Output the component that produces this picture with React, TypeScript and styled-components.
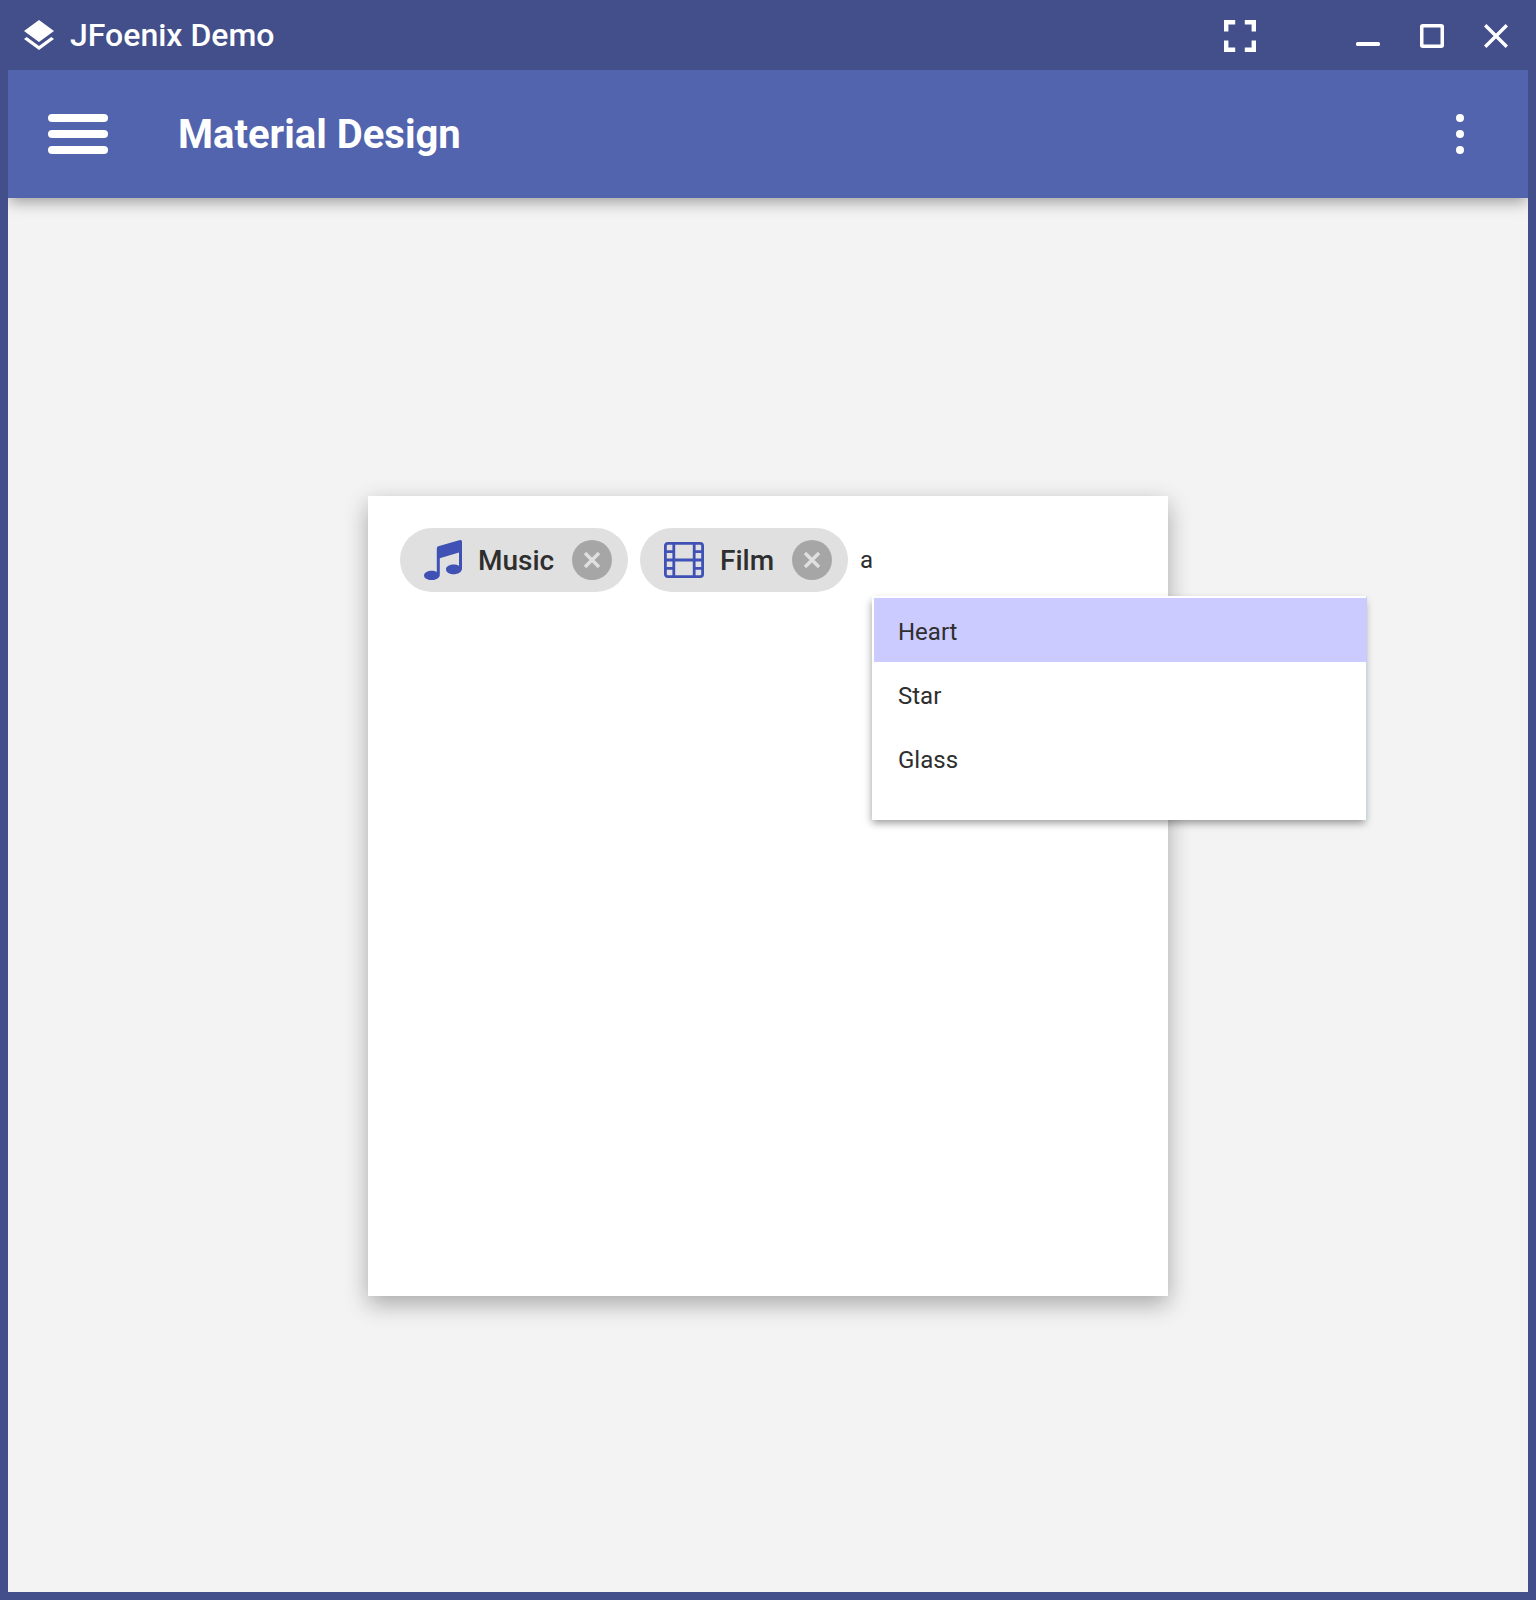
import React from "react";
import styled, { createGlobalStyle } from "styled-components";

const GlobalStyle = createGlobalStyle`
  *, *::before, *::after { box-sizing: border-box; }
  body { margin: 0; font-family: Roboto, "Liberation Sans", sans-serif; }
`;

const WindowFrame = styled.div`
  width: 1536px;
  height: 1600px;
  display: flex;
  flex-direction: column;
  padding: 0 8px 8px;
  background: #424f8a;
  overflow: hidden;
`;

const TitleBar = styled.header`
  height: 70px;
  flex: none;
  display: flex;
  align-items: flex-start;
  padding: 20px 20px 0 16px;
  color: #fff;
`;

const WindowTitle = styled.h1`
  margin: -4px 0 0 16px;
  flex: 1;
  font-size: 32px;
  font-weight: 500;
  line-height: 38px;
`;

const WindowControls = styled.div`
  display: flex;
  gap: 40px;
  padding-top: 4px;
  margin-left: 100px;
`;

const Glyph = styled.svg`
  display: block;
  flex: none;
`;

const Toolbar = styled.nav`
  height: 128px;
  flex: none;
  position: relative;
  z-index: 1;
  display: flex;
  align-items: center;
  padding: 0 64px 0 40px;
  background: #5264ae;
  color: #fff;
  box-shadow: 0 5px 14px -1px rgba(0, 0, 0, 0.36);
  clip-path: inset(0 0 -30px 0);
`;

const Burger = styled.div`
  display: grid;
  gap: 8px;
  width: 60px;
`;

const BurgerLine = styled.span`
  height: 8px;
  border-radius: 4px;
  background: #fff;
`;

const PageTitle = styled.h2`
  margin: 0 0 0 70px;
  padding-top: 2px;
  flex: 1;
  font-size: 40px;
  font-weight: 700;
  line-height: 48px;
`;

const Overflow = styled.div`
  display: grid;
  gap: 8px;
`;

const Dot = styled.span`
  width: 8px;
  height: 8px;
  border-radius: 50%;
  background: #fff;
`;

const Content = styled.main`
  flex: 1;
  display: flex;
  justify-content: center;
  align-items: flex-start;
  padding-top: 298px;
  background: #f3f3f3;
`;

const ChipPane = styled.section`
  position: relative;
  width: 800px;
  height: 800px;
  display: flex;
  align-items: flex-start;
  gap: 12px;
  padding: 32px;
  background: #fff;
  box-shadow: 0 8px 22px rgba(0, 0, 0, 0.31);
`;

const ChipBox = styled.div<{ $width: number }>`
  width: ${(p) => p.$width}px;
  height: 64px;
  display: flex;
  align-items: center;
  padding: 0 16px 0 24px;
  border-radius: 32px;
  background: #e0e0e0;
`;

const ChipLabel = styled.span<{ $offset: number }>`
  flex: 1;
  margin-left: ${(p) => p.$offset}px;
  padding-top: 2px;
  font-size: 28px;
  font-weight: 500;
  line-height: 32px;
  color: #2e2e2e;
`;

const RemoveButton = styled.span`
  width: 40px;
  height: 40px;
  display: grid;
  place-items: center;
  border-radius: 50%;
  background: #a6a6a6;
`;

const Typed = styled.span`
  line-height: 64px;
  font-size: 24px;
  color: #2e2e2e;
`;

const Suggestions = styled.ul`
  position: absolute;
  left: 504px;
  top: 100px;
  width: 495px;
  height: 224px;
  margin: 0;
  padding: 2px 0 0 2px;
  list-style: none;
  background: #fff;
  box-shadow: -1px 4px 8px -1px rgba(0, 0, 0, 0.4);
  border-right: 1px solid #bcdde2;
`;

const Suggestion = styled.li<{ $active?: boolean }>`
  width: ${(p) => (p.$active ? "493px" : "auto")};
  height: 64px;
  padding: 2px 24px 0;
  font-size: 24px;
  line-height: 64px;
  color: #2e2e2e;
  background: ${(p) => (p.$active ? "#cbcbff" : "transparent")};
`;

const LayersIcon = () => (
  <Glyph width="30" height="30" viewBox="3 2 18 19.07" preserveAspectRatio="none" fill="#fff">
    <path d="M11.99 18.54l-7.37-5.73L3 14.07l9 7 9-7-1.63-1.27-7.38 5.74zM12 16l7.36-5.73L21 9l-9-7-9 7 1.63 1.27L12 16z" />
  </Glyph>
);

const FullscreenIcon = () => (
  <Glyph width="32" height="32" viewBox="0 0 32 32" fill="none" stroke="#fff" strokeWidth="4.4">
    <path d="M2.2 11.5V2.2H11.2M20.8 2.2H29.8V11.5M29.8 20.5V29.8H20.8M11.2 29.8H2.2V20.5" />
  </Glyph>
);

const MinimizeIcon = () => (
  <Glyph width="24" height="24" viewBox="0 0 24 24" fill="#fff">
    <rect y="18" width="24" height="4" rx="1.5" />
  </Glyph>
);

const MaximizeIcon = () => (
  <Glyph width="24" height="24" viewBox="0 0 24 24" fill="none" stroke="#fff" strokeWidth="3.5">
    <rect x="1.75" y="1.75" width="20.5" height="20.5" rx="1" />
  </Glyph>
);

const CloseIcon = () => (
  <Glyph width="24" height="24" viewBox="0 0 24 24" fill="none" stroke="#fff" strokeWidth="3.4">
    <path d="M1.2 1.2L22.8 22.8M22.8 1.2L1.2 22.8" />
  </Glyph>
);

const MusicIcon = () => (
  <Glyph width="38" height="40" viewBox="0 0 38 40" fill="#3f51b5">
    <path d="M12.8 8.4Q12.8 6.8 14.3 6.3L36 .1Q38 -.2 38 1.8V28.5C38 36 22 36 22 29.2C22 24.8 30.5 23.2 35 25.8V12.4L15.8 18.2V34.8C15.8 41.8 0 41.8 0 35.6C0 31 8.5 29.6 12.8 32Z" />
  </Glyph>
);

const FilmIcon = () => (
  <Glyph width="40" height="36" viewBox="0 0 40 36" fill="none" stroke="#3f51b5" strokeWidth="2.8">
    <rect x="1.4" y="1.4" width="37.2" height="33.2" rx="2.4" />
    <path d="M9.8 1V35M30.2 1V35M9.8 18H30.2M1 9.7H9.8M1 18H9.8M1 26.3H9.8M30.2 9.7H39M30.2 18H39M30.2 26.3H39" />
  </Glyph>
);

interface ChipProps {
  icon: React.ReactNode;
  label: string;
  width: number;
  offset: number;
}

const Chip = ({ icon, label, width, offset }: ChipProps) => (
  <ChipBox $width={width}>
    {icon}
    <ChipLabel $offset={offset}>{label}</ChipLabel>
    <RemoveButton>
      <Glyph width="16" height="16" viewBox="0 0 16 16" stroke="#e0e0e0" strokeWidth="3.4">
        <path d="M1 1L15 15M15 1L1 15" />
      </Glyph>
    </RemoveButton>
  </ChipBox>
);

export default function App() {
  return (
    <>
      <GlobalStyle />
      <WindowFrame>
        <TitleBar>
          <LayersIcon />
          <WindowTitle>JFoenix Demo</WindowTitle>
          <FullscreenIcon />
          <WindowControls>
            <MinimizeIcon />
            <MaximizeIcon />
            <CloseIcon />
          </WindowControls>
        </TitleBar>
        <Toolbar>
          <Burger>
            <BurgerLine />
            <BurgerLine />
            <BurgerLine />
          </Burger>
          <PageTitle>Material Design</PageTitle>
          <Overflow>
            <Dot />
            <Dot />
            <Dot />
          </Overflow>
        </Toolbar>
        <Content>
          <ChipPane>
            <Chip icon={<MusicIcon />} label="Music" width={228} offset={16} />
            <Chip icon={<FilmIcon />} label="Film" width={208} offset={16} />
            <Typed>a</Typed>
            <Suggestions>
              <Suggestion $active>Heart</Suggestion>
              <Suggestion>Star</Suggestion>
              <Suggestion>Glass</Suggestion>
            </Suggestions>
          </ChipPane>
        </Content>
      </WindowFrame>
    </>
  );
}
